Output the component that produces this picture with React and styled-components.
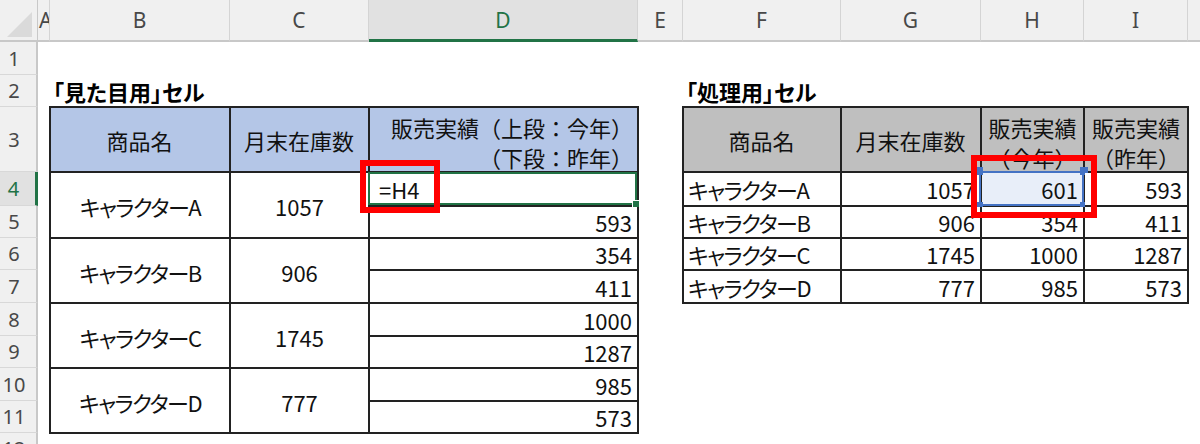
import styled, { createGlobalStyle } from "styled-components";

const GlobalStyle = createGlobalStyle`
  html, body { margin: 0; padding: 0; background: #fff; }
  body { font-family: "Noto Sans CJK JP", "Noto Sans", sans-serif; }
`;

const LETTERS = ["A", "B", "C", "D", "E", "F", "G", "H", "I", ""];
const COL_W = [12, 180, 139, 269, 45, 158, 140, 103, 104, 60];
const ROW_H = [33, 32, 65, 34, 32, 32, 33, 33, 32, 33, 32, 32];

const px = (list) => list.map((v) => v + "px").join(" ");

const leftRows = [
  { name: "キャラクターA", stock: 1057, vals: ["=H4", 593] },
  { name: "キャラクターB", stock: 906, vals: [354, 411] },
  { name: "キャラクターC", stock: 1745, vals: [1000, 1287] },
  { name: "キャラクターD", stock: 777, vals: [985, 573] },
];

const rightRows = [
  ["キャラクターA", 1057, 601, 593],
  ["キャラクターB", 906, 354, 411],
  ["キャラクターC", 1745, 1000, 1287],
  ["キャラクターD", 777, 985, 573],
];

export default function App() {
  return (
    <>
      <GlobalStyle />
      <Sheet>
        <Corner>
          <svg width="38" height="42" viewBox="0 0 38 42">
            <polygon points="7,37 32,37 32,12" fill="#dadada" />
          </svg>
        </Corner>
        {LETTERS.map((l, i) => (
          <ColHead key={i} $col={i + 2} $active={l === "D"} $clip={l === "A"}>
            {l}
          </ColHead>
        ))}
        {ROW_H.map((_, i) => (
          <RowHead key={i} $row={i + 2} $active={i + 1 === 4}>
            {i + 1}
          </RowHead>
        ))}

        <Title $col={3} $row={3}>「見た目用」セル</Title>
        <Title $col={7} $row={3}>「処理用」セル</Title>

        <Table
          $cols="3 / 6"
          $rows="4 / 13"
          $w={px([180, 139, 269])}
          $h={px([65, 34, 32, 32, 33, 33, 32, 33, 32])}
        >
          <Cell $c={1} $r={1} $bg="#b4c6e7">商品名</Cell>
          <Cell $c={2} $r={1} $bg="#b4c6e7">月末在庫数</Cell>
          <Cell $c={3} $r={1} $bg="#b4c6e7" $top>
            <Lines $align="flex-end">
              <span>販売実績（上段：今年）</span>
              <span>（下段：昨年）</span>
            </Lines>
          </Cell>
          {leftRows.map((row, i) => (
            <Group key={row.name} row={row} r={2 + i * 2} first={i === 0} />
          ))}
        </Table>

        <Table
          $cols="7 / 11"
          $rows="4 / 9"
          $w={px([158, 140, 103, 104])}
          $h={px([65, 34, 32, 32, 33])}
        >
          <Cell $c={1} $r={1} $bg="#bfbfbf">商品名</Cell>
          <Cell $c={2} $r={1} $bg="#bfbfbf">月末在庫数</Cell>
          <Cell $c={3} $r={1} $bg="#bfbfbf" $top>
            <Lines $align="center">
              <span>販売実績</span>
              <span>（今年）</span>
            </Lines>
          </Cell>
          <Cell $c={4} $r={1} $bg="#bfbfbf" $top>
            <Lines $align="center">
              <span>販売実績</span>
              <span>（昨年）</span>
            </Lines>
          </Cell>
          {rightRows.map((row, i) =>
            row.map((v, j) => {
              const picked = i === 0 && j === 2;
              return (
                <Cell
                  key={i + "-" + j}
                  $c={j + 1}
                  $r={i + 2}
                  $align={j === 0 ? "left" : "right"}
                  $bg={picked ? "#e8eef9" : undefined}
                >
                  {j === 0 ? <Name>{v}</Name> : v}
                  {picked && (
                    <>
                      <RefFrame>
                        <Handle $x="left" $y="top" />
                        <Handle $x="right" $y="top" />
                        <Handle $x="left" $y="bottom" />
                        <Handle $x="right" $y="bottom" />
                      </RefFrame>
                      <Callout $x={-11} $y={-18} $w={126} $h={63} />
                    </>
                  )}
                </Cell>
              );
            })
          )}
        </Table>
      </Sheet>
    </>
  );
}

function Group({ row, r, first }) {
  return (
    <>
      <Cell $c={1} $r={r} $span={2} $drop>
        <Name>{row.name}</Name>
      </Cell>
      <Cell $c={2} $r={r} $span={2} $drop>{row.stock}</Cell>
      {row.vals.map((v, k) =>
        first && k === 0 ? (
          <Cell key={k} $c={3} $r={r} $align="left" $indent>
            {v}
            <EditFrame>
              <FillHandle />
            </EditFrame>
            <Callout $x={-10} $y={-13} $w={80} $h={53} />
          </Cell>
        ) : (
          <Cell key={k} $c={3} $r={r + k} $align="right">
            {v}
          </Cell>
        )
      )}
    </>
  );
}

const Sheet = styled.div`
  display: grid;
  grid-template-columns: 38px ${px(COL_W)};
  grid-template-rows: 42px ${px(ROW_H)};
  width: 1200px;
  height: 444px;
  overflow: hidden;
  background: #fff;
`;

const Corner = styled.div`
  grid-column: 1;
  grid-row: 1;
  background: #f0f0f0;
  border-right: 1px solid #c8c8c8;
  border-bottom: 2px solid #c8c8c8;
  box-sizing: border-box;
  overflow: hidden;
`;

const ColHead = styled.div`
  grid-row: 1;
  grid-column: ${(p) => p.$col};
  display: flex;
  align-items: center;
  justify-content: ${(p) => (p.$clip ? "flex-start" : "center")};
  padding-left: ${(p) => (p.$clip ? "1px" : "0")};
  box-sizing: border-box;
  overflow: hidden;
  background: ${(p) => (p.$active ? "#e1e1e1" : "#f0f0f0")};
  color: ${(p) => (p.$active ? "#217346" : "#484848")};
  border-right: 1px solid #d4d4d4;
  border-bottom: ${(p) => (p.$active ? "3px solid #217346" : "2px solid #c8c8c8")};
  font-family: "Noto Sans", sans-serif;
  font-size: 21px;
`;

const RowHead = styled.div`
  grid-column: 1;
  grid-row: ${(p) => p.$row};
  display: flex;
  align-items: center;
  justify-content: center;
  padding-right: 8px;
  box-sizing: border-box;
  background: ${(p) => (p.$active ? "#e1e1e1" : "#f0f0f0")};
  color: ${(p) => (p.$active ? "#217346" : "#484848")};
  border-bottom: 1px solid #d8d8d8;
  border-right: ${(p) => (p.$active ? "3px solid #217346" : "2px solid #c8c8c8")};
  font-family: "Noto Sans", sans-serif;
  font-size: 20px;
`;

const Title = styled.div`
  grid-column: ${(p) => p.$col};
  grid-row: ${(p) => p.$row};
  align-self: center;
  padding-left: 3px;
  white-space: nowrap;
  font-size: 22px;
  font-weight: 700;
  color: #000;
  line-height: 1;
  font-feature-settings: "palt";
`;

const Table = styled.div`
  grid-column: ${(p) => p.$cols};
  grid-row: ${(p) => p.$rows};
  align-self: start;
  justify-self: start;
  margin: -1px 0 0 -1px;
  display: grid;
  grid-template-columns: ${(p) => p.$w};
  grid-template-rows: ${(p) => p.$h};
  border-top: 2px solid #222;
  border-left: 2px solid #222;
  background: #fff;
  font-size: 22px;
  color: #111;
`;

const Cell = styled.div`
  grid-column: ${(p) => p.$c};
  grid-row: ${(p) => p.$r} / span ${(p) => p.$span || 1};
  position: relative;
  box-sizing: border-box;
  display: flex;
  align-items: ${(p) => (p.$top ? "flex-start" : "center")};
  justify-content: ${(p) =>
    p.$align === "left" ? "flex-start" : p.$align === "right" ? "flex-end" : "center"};
  padding: ${(p) =>
    p.$top ? "4px 4px 0 4px" : p.$drop ? "2px 4px 0 4px" : p.$indent ? "0 5px 0 9px" : "0 5px 0 4px"};
  border-right: 2px solid #222;
  border-bottom: 2px solid #222;
  background: ${(p) => p.$bg || "#fff"};
  white-space: nowrap;
  line-height: 1;
`;

const Name = styled.span`
  font-feature-settings: "palt";
  letter-spacing: -1.5px;
`;

const Lines = styled.div`
  width: 100%;
  display: flex;
  flex-direction: column;
  align-items: ${(p) => p.$align};
  line-height: 30px;
`;

const EditFrame = styled.div`
  position: absolute;
  left: -2px;
  top: -1px;
  right: 0;
  bottom: 0;
  border: 2px solid #217346;
  pointer-events: none;
`;

const FillHandle = styled.div`
  position: absolute;
  right: -5px;
  bottom: -5px;
  width: 6px;
  height: 6px;
  background: #217346;
  border: 1px solid #fff;
`;

const RefFrame = styled.div`
  position: absolute;
  left: -3px;
  top: -2px;
  right: -1px;
  bottom: -1px;
  border: 2px solid #4472c4;
`;

const Handle = styled.span`
  position: absolute;
  ${(p) => p.$x}: -6px;
  ${(p) => p.$y}: -6px;
  width: 8px;
  height: 8px;
  background: #4472c4;
`;

const Callout = styled.div`
  position: absolute;
  left: ${(p) => p.$x}px;
  top: ${(p) => p.$y}px;
  width: ${(p) => p.$w}px;
  height: ${(p) => p.$h}px;
  box-sizing: border-box;
  border: 6px solid #ff0000;
  z-index: 2;
`;
